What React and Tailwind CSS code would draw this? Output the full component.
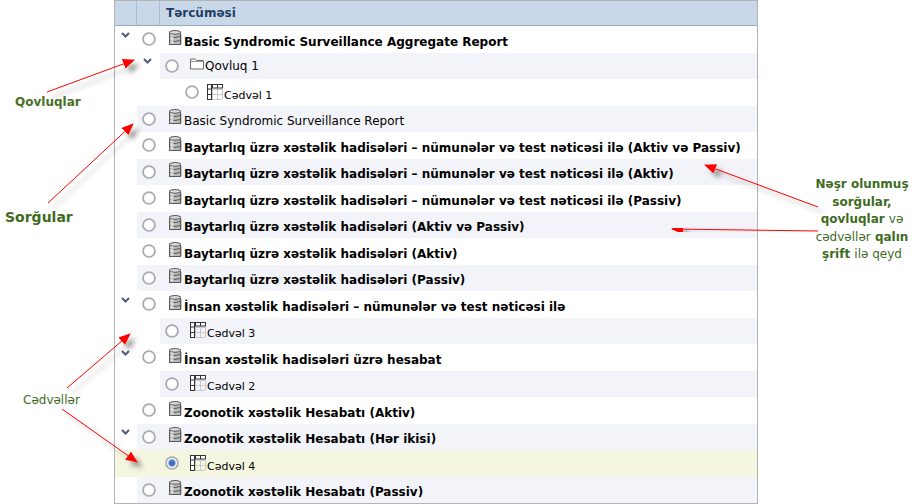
import React from 'react';

const rows = [
  { name: 'Basic Syndromic Surveillance Aggregate Report', type: 'db', bold: true, open: true },
  { name: 'Qovluq 1', type: 'folder', level: 1, open: true, tint: true },
  { name: 'Cədvəl 1', type: 'table', level: 2 },
  { name: 'Basic Syndromic Surveillance Report', type: 'db', tint: true },
  { name: 'Baytarlıq üzrə xəstəlik hadisələri – nümunələr və test nəticəsi ilə (Aktiv və Passiv)', type: 'db', bold: true },
  { name: 'Baytarlıq üzrə xəstəlik hadisələri – nümunələr və test nəticəsi ilə (Aktiv)', type: 'db', bold: true, tint: true },
  { name: 'Baytarlıq üzrə xəstəlik hadisələri – nümunələr və test nəticəsi ilə (Passiv)', type: 'db', bold: true },
  { name: 'Baytarlıq üzrə xəstəlik hadisələri (Aktiv və Passiv)', type: 'db', bold: true, tint: true },
  { name: 'Baytarlıq üzrə xəstəlik hadisələri (Aktiv)', type: 'db', bold: true },
  { name: 'Baytarlıq üzrə xəstəlik hadisələri (Passiv)', type: 'db', bold: true, tint: true },
  { name: 'İnsan xəstəlik hadisələri – nümunələr və test nəticəsi ilə', type: 'db', bold: true, open: true },
  { name: 'Cədvəl 3', type: 'table', level: 1, tint: true },
  { name: 'İnsan xəstəlik hadisələri üzrə hesabat', type: 'db', bold: true, open: true },
  { name: 'Cədvəl 2', type: 'table', level: 1, tint: true },
  { name: 'Zoonotik xəstəlik Hesabatı (Aktiv)', type: 'db', bold: true },
  { name: 'Zoonotik xəstəlik Hesabatı (Hər ikisi)', type: 'db', bold: true, open: true, tint: true },
  { name: 'Cədvəl 4', type: 'table', level: 1, selected: true },
  { name: 'Zoonotik xəstəlik Hesabatı (Passiv)', type: 'db', bold: true, tint: true },
];

const arrows = [
  [47, 92, 134, 60],
  [48, 203, 133, 124],
  [50, 227, 124, 227],
  [67, 388, 130, 334],
  [62, 409, 137, 462],
  [818, 207, 705, 165],
  [818, 231, 672, 229],
];

function Chevron() {
  return (
    <svg width="9" height="6" viewBox="0 0 9 6" className="mb-[9px]">
      <path d="M1 1 L4.5 4.5 L8 1" fill="none" stroke="#4f5a7c" strokeWidth="2" />
    </svg>
  );
}

function Radio({ selected }) {
  return (
    <svg width="14" height="14" viewBox="0 0 14 14" className="shrink-0">
      <circle cx="7" cy="7" r="6" fill="#f4f4f6" stroke="#a3a6ae" strokeWidth="1.6" />
      <circle cx="7" cy="7" r="4" fill="#ffffff" />
      {selected && <circle cx="7" cy="7" r="3.4" fill="#3f6fc4" stroke="#8fa6d8" strokeWidth="0.8" />}
    </svg>
  );
}

function DbIcon() {
  return (
    <svg width="13" height="16" viewBox="0 0 13 16" className="shrink-0">
      <rect x="0.5" y="2" width="11" height="12.5" fill="#b9b9b9" stroke="#5a5a5a" />
      <ellipse cx="6" cy="2.4" rx="5.5" ry="1.9" fill="#d9d9d9" stroke="#5a5a5a" />
      <path d="M1 6.5 Q6 8.5 11 6.5 M1 10.5 Q6 12.5 11 10.5" fill="none" stroke="#5a5a5a" />
      <rect x="1.5" y="4.5" width="3" height="9" fill="#ececec" opacity="0.7" />
      <path d="M12.5 4 V14 " stroke="#c8c8c8" />
    </svg>
  );
}

function FolderIcon() {
  return (
    <svg width="14" height="12" viewBox="0 0 14 12" className="shrink-0">
      <path d="M0.5 11 V1 H5 L6.5 2.5 H13.5 V11 Z" fill="#fdfdfd" stroke="#6b6b6b" />
      <path d="M0.5 3.5 H13.5" stroke="#9a9a9a" />
    </svg>
  );
}

function TableIcon() {
  return (
    <svg width="16" height="16" viewBox="0 0 16 16" className="shrink-0">
      <path d="M5.5 1 V15 M10.5 1 V15 M1 5.5 H15 M1 10.5 H15 M15.5 5 V15 M5 15.5 H15" stroke="#c9c9c9" fill="none" />
      <rect x="0.5" y="0.5" width="15" height="3.5" fill="#ffffff" stroke="#333333" />
      <rect x="0.5" y="0.5" width="4" height="15" fill="#ffffff" stroke="#333333" />
      <path d="M5.5 0.5 V4 M10.5 0.5 V4 M0.5 5 H4.5 M0.5 10.5 H4.5" stroke="#333333" />
    </svg>
  );
}

function Row({ row }) {
  const level = row.level || 0;
  const icon = row.type === 'db' ? <DbIcon /> : row.type === 'folder' ? <FolderIcon /> : <TableIcon />;
  return (
    <div className={`flex h-[26.5px] ${row.selected ? 'bg-[#f4f6e0]' : ''}`}>
      <div className={`flex shrink-0 items-center ${level === 0 ? 'w-[22px] justify-start pl-[6px]' : 'w-[45px] justify-end pr-[8px]'}`}>
        {row.open && <Chevron />}
      </div>
      <div className={`flex min-w-0 flex-1 items-center ${row.tint ? 'bg-[#f3f4f9]' : ''} ${level === 2 ? 'pl-[25px]' : 'pl-[5px]'}`}>
        <Radio selected={row.selected} />
        <div className={`flex items-end ${level === 0 ? 'ml-[13px]' : level === 2 ? 'ml-[8px]' : 'ml-[11px]'} mb-[1px]`}>
          <span className={row.type === 'table' ? '' : 'pb-[2px]'}>{icon}</span>
          <span
            className={`whitespace-nowrap leading-[14px] text-black ${row.bold ? 'font-bold' : ''} ${row.type === 'table' ? 'text-[11px] -mb-[3px]' : 'text-[12px] -mb-[1px]'} ${row.type === 'db' ? 'ml-[2px]' : 'ml-[1px]'}`}
          >
            {row.name}
          </span>
        </div>
      </div>
    </div>
  );
}

export default function App() {
  return (
    <div className="relative flex h-[504px] w-[916px] bg-white font-['DejaVu_Sans',sans-serif]">
      <div className="w-[114px] shrink-0" />
      <div className="h-[504px] w-[644px] shrink-0 border border-[#b4b4b4]">
        <div className="flex h-[25px] border-b border-[#8fa9c8] bg-[#c9d8e9] text-[12px] font-bold text-[#1f3f66]">
          <div className="w-[22px] border-r border-[#a9bdd6]" />
          <div className="w-[23px] border-r border-[#a9bdd6]" />
          <div className="flex items-center pl-[6px]">Tərcüməsi</div>
        </div>
        {rows.map((row) => (
          <Row key={row.name} row={row} />
        ))}
      </div>

      {/* annotations */}
      <svg className="pointer-events-none absolute left-0 top-0" width="916" height="504">
        <defs>
          <filter id="shadow" x="-30%" y="-30%" width="160%" height="160%">
            <feDropShadow dx="5" dy="5" stdDeviation="2.5" floodColor="#000000" floodOpacity="0.4" />
          </filter>
          <marker id="head" markerWidth="12" markerHeight="10" refX="11" refY="5" orient="auto" markerUnits="userSpaceOnUse">
            <path d="M0 0 L12 5 L0 10 Z" fill="#ff0000" />
          </marker>
        </defs>
        {arrows.map(([x1, y1, x2, y2]) => (
          <line
            key={`${x1}-${y1}`}
            x1={x1}
            y1={y1}
            x2={x2}
            y2={y2}
            stroke="#ff0000"
            strokeWidth="1"
            markerEnd="url(#head)"
            filter="url(#shadow)"
          />
        ))}
      </svg>
      <div className="absolute left-[15px] top-[94px] text-[12px] font-bold leading-[16px] text-[#4a7023]">Qovluqlar</div>
      <div className="absolute left-[5px] top-[208px] text-[14px] font-bold leading-[18px] text-[#3f6b1f]">Sorğular</div>
      <div className="absolute left-[23px] top-[392px] text-[12px] leading-[16px] text-[#3f6b1f]">Cədvəllər</div>
      <div className="absolute left-[808px] top-[176px] w-[108px] text-center text-[12px] font-bold leading-[17.6px] text-[#3f6b1f]">
        Nəşr olunmuş sorğular,
        <br />
        qovluqlar <span className="font-normal">və</span>
        <br />
        <span className="font-normal">cədvəllər</span> qalın
        <br />
        şrift <span className="font-normal">ilə qeyd</span>
      </div>
    </div>
  );
}
